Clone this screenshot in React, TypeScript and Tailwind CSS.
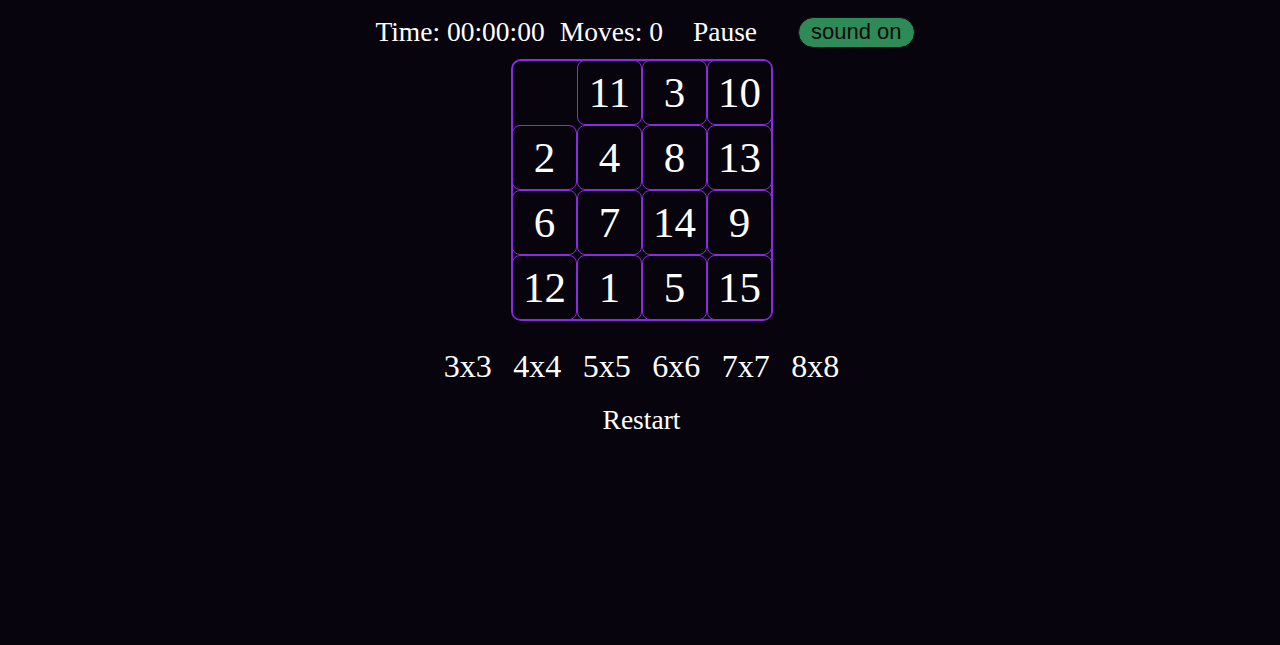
import React from "react";

const tiles: (number | null)[] = [null, 11, 3, 10, 2, 4, 8, 13, 6, 7, 14, 9, 12, 1, 5, 15];
const sizes = ["3x3", "4x4", "5x5", "6x6", "7x7", "8x8"];

export default function App() {
  return (
    <div
      className="w-full h-[645px] bg-[#08040d] text-white flex flex-col items-center"
      style={{ fontFamily: '"Liberation Serif", "Times New Roman", serif' }}
    >
      <div className="flex items-center mt-[16px] h-[32px] ml-[10px]">
        <span className="text-[27.5px] leading-none">Time: 00:00:00</span>
        <span className="text-[27.5px] leading-none ml-[15px]">Moves: 0</span>
        <span className="text-[27.5px] leading-none ml-[30px]">Pause</span>
        <button
          className="ml-[41px] h-[31px] px-[12px] rounded-full bg-[#2e8b57] border border-[#111] text-[#0a0a0a] text-[22px] leading-none"
          style={{ fontFamily: '"Liberation Sans", Arial, sans-serif' }}
        >
          sound on
        </button>
      </div>
      <div className="mt-[11px] ml-[4px] w-[262px] h-[262px] border-2 border-[#8a2be2] rounded-[10px]">
        <div className="m-[-1px] w-[260px] h-[260px] grid grid-cols-4 grid-rows-4">
          {tiles.map((t, i) =>
            t === null ? (
              <div key={i} />
            ) : (
              <div
                key={i}
                className="border border-[#8a2be2] rounded-[8px] bg-[#08040d] flex items-center justify-center text-[43px] leading-none"
              >
                {t}
              </div>
            )
          )}
        </div>
      </div>
      <div className="flex gap-[21.5px] mt-[29px] ml-[3px]">
        {sizes.map((s) => (
          <span key={s} className="text-[32px] leading-none">
            {s}
          </span>
        ))}
      </div>
      <div className="mt-[24px] ml-[3px] text-[27.5px] leading-none">Restart</div>
    </div>
  );
}
